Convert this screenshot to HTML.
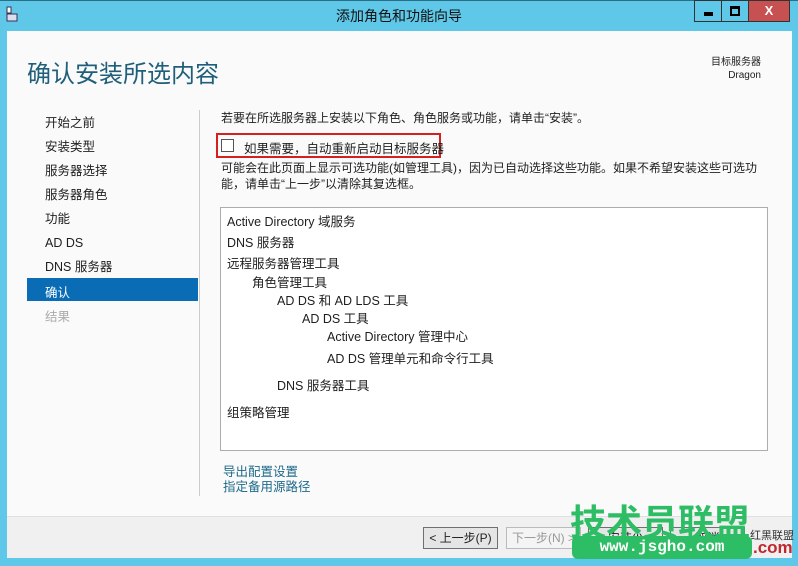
<!DOCTYPE html>
<html><head><meta charset="utf-8"><style>
*{margin:0;padding:0;box-sizing:border-box}
body{width:798px;height:566px;background:#5fc8e8;font-family:"Liberation Sans","Noto Sans CJK SC",sans-serif;position:relative;overflow:hidden;color:#1e1e1e}
.a{position:absolute;white-space:nowrap}
.t{font-size:12.5px}
</style></head><body>
<div class="a" style="left:0;top:0;width:798px;height:1px;background:#2a6f86"></div>
<svg class="a" style="left:6px;top:6px" width="12" height="16"><rect x="1" y="1" width="4" height="6" fill="#fff" stroke="#335"/><rect x="1" y="8" width="10" height="7" fill="#dde" stroke="#335"/></svg>
<div class="a" style="left:0;width:798px;top:6px;text-align:center;font-size:14px;color:#111">添加角色和功能向导</div>
<div class="a" style="left:694px;top:0;width:28px;height:22px;border:1px solid #333;background:#5fc8e8"><div class="a" style="left:9px;top:11px;width:9px;height:4px;background:#000"></div></div>
<div class="a" style="left:721px;top:0;width:28px;height:22px;border:1px solid #333;background:#5fc8e8"><div class="a" style="left:8px;top:5px;width:10px;height:10px;border:2px solid #000;border-top-width:3px"></div></div>
<div class="a" style="left:748px;top:0;width:42px;height:22px;border:1px solid #333;background:#c75050;color:#fff;font-weight:bold;font-size:13px;text-align:center;line-height:20px">X</div>
<div class="a" style="left:7px;top:31px;width:785px;height:486px;background:#fafafa"></div>
<div class="a" style="left:7px;top:516px;width:785px;height:42px;background:#f0f0f0;border-top:1px solid #e0e0e0"></div>
<div class="a" style="left:27px;top:54px;font-size:24px;color:#1f5f7a">确认安装所选内容</div>
<div class="a" style="right:37px;top:56px;font-size:10px;text-align:right;line-height:13px">目标服务器<br>Dragon</div>
<div class="a" style="left:199px;top:110px;width:1px;height:386px;background:#ccc"></div>
<div class="a t" style="left:45px;top:111px;line-height:24px">开始之前<br>安装类型<br>服务器选择<br>服务器角色<br>功能<br>AD DS<br>DNS 服务器</div>
<div class="a" style="left:27px;top:278px;width:171px;height:23px;background:#0b6cb6"></div>
<div class="a t" style="left:45px;top:282px;color:#fff">确认</div>
<div class="a t" style="left:45px;top:306px;color:#aaa">结果</div>
<div class="a" style="left:221px;top:109px;font-size:12px">若要在所选服务器上安装以下角色、角色服务或功能，请单击“安装”。</div>
<div class="a" style="left:216px;top:133px;width:225px;height:25px;border:2px solid #d42020"></div>
<div class="a" style="left:221px;top:139px;width:13px;height:13px;border:1px solid #555;background:#fff"></div>
<div class="a t" style="left:244px;top:138px">如果需要，自动重新启动目标服务器</div>
<div class="a" style="left:221px;top:160px;font-size:12px;line-height:16px">可能会在此页面上显示可选功能(如管理工具)，因为已自动选择这些功能。如果不希望安装这些可选功<br>能，请单击“上一步”以清除其复选框。</div>
<div class="a" style="left:220px;top:207px;width:548px;height:244px;background:#fff;border:1px solid #adadad"></div>
<div class="a t" style="left:227px;top:211px">Active Directory 域服务</div>
<div class="a t" style="left:227px;top:232px">DNS 服务器</div>
<div class="a t" style="left:227px;top:253px">远程服务器管理工具</div>
<div class="a t" style="left:252px;top:272px">角色管理工具</div>
<div class="a t" style="left:277px;top:290px">AD DS 和 AD LDS 工具</div>
<div class="a t" style="left:302px;top:308px">AD DS 工具</div>
<div class="a t" style="left:327px;top:326px">Active Directory 管理中心</div>
<div class="a t" style="left:327px;top:348px">AD DS 管理单元和命令行工具</div>
<div class="a t" style="left:277px;top:375px">DNS 服务器工具</div>
<div class="a t" style="left:227px;top:402px">组策略管理</div>
<div class="a t" style="left:223px;top:465px;color:#1d6a8a;line-height:15px">导出配置设置<br>指定备用源路径</div>
<div class="a" style="left:423px;top:527px;width:75px;height:22px;border:1px solid #707070;background:#e5e5e5;font-size:12px;text-align:center;line-height:20px">&lt; 上一步(P)</div>
<div class="a" style="left:506px;top:527px;width:75px;height:22px;border:1px solid #bbb;background:#f4f4f4;color:#999;font-size:12px;text-align:center;line-height:20px">下一步(N) &gt;</div>
<div class="a" style="left:588px;top:527px;width:75px;height:22px;border:1px solid #707070;background:#e5e5e5;font-size:12px;text-align:center;line-height:20px">安装(I)</div>
<div class="a" style="left:670px;top:527px;width:75px;height:22px;border:1px solid #707070;background:#e5e5e5;font-size:12px;text-align:center;line-height:20px">取消</div>
<div class="a" style="left:750px;top:527px;font-size:11px;color:#333">红黑联盟</div>
<div class="a" style="left:753px;top:538px;font-size:17px;color:#c0282d;font-weight:bold">.com</div>
<div class="a" style="left:570px;top:494px;font-size:36px;font-weight:bold;color:#2dbd64;letter-spacing:0px">技术员联盟</div>
<div class="a" style="left:572px;top:536px;width:180px;height:23px;border-radius:6px;background:#2dbd64;color:#fff;font-size:16px;font-weight:bold;text-align:center;line-height:23px;font-family:'Liberation Mono',monospace">www.jsgho.com</div>
</body></html>
